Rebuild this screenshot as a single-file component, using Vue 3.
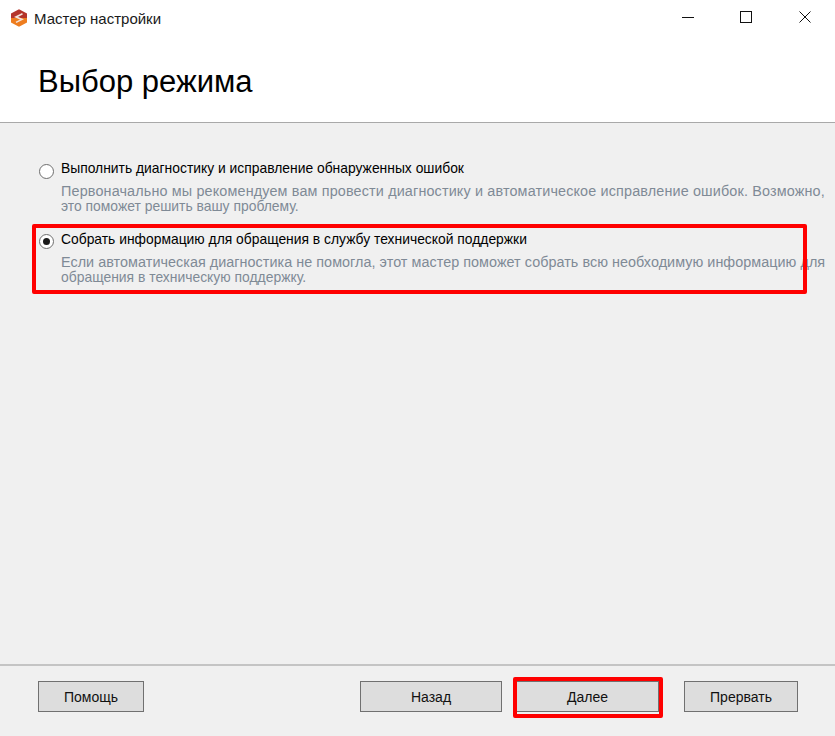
<script setup>
const options = [
  { title: 'Выполнить диагностику и исправление обнаруженных ошибок', lines: [{ text: 'Первоначально мы рекомендуем вам провести диагностику и автоматическое исправление ошибок. Возможно,', kind: 'long-a' }, { text: 'это поможет решить вашу проблему.', kind: 'short' }], checked: false },
  { title: 'Собрать информацию для обращения в службу технической поддержки', lines: [{ text: 'Если автоматическая диагностика не помогла, этот мастер поможет собрать всю необходимую информацию для', kind: 'long-b' }, { text: 'обращения в техническую поддержку.', kind: 'short' }], checked: true }
]
</script>

<template>
  <div class="win">
    <div class="top">
      <div class="titlebar">
        <svg class="logo" width="18" height="18" viewBox="0 0 18 18">
          <path d="M9 0.2 17 4.6V9H1V4.6Z" fill="#b5342a"/>
          <path d="M1 9H17V13.4L9 17.8 1 13.4Z" fill="#ee7d1f"/>
          <path d="M12.5 4.8 6 8 12 10.4 6 13.4" fill="none" stroke="#f3e3da" stroke-width="1.6"/>
        </svg>
        <span class="wintitle">Мастер настройки</span>
        <div class="controls">
          <svg width="12" height="12" viewBox="0 0 12 12"><path d="M0 6.5H12" stroke="#111" fill="none"/></svg>
          <svg width="12" height="12" viewBox="0 0 12 12"><rect x="0.5" y="0.5" width="11" height="11" stroke="#111" fill="none"/></svg>
          <svg class="close" width="12" height="12" viewBox="0 0 12 12"><path d="M0.5 0.5 11.5 11.5M11.5 0.5 0.5 11.5" stroke="#111" fill="none"/></svg>
        </div>
      </div>
      <h1 class="heading">Выбор режима</h1>
    </div>

    <main class="content">
      <div v-for="o in options" :key="o.title" class="option">
        <span class="radio" :class="{ on: o.checked }"></span>
        <div class="texts">
          <div class="otitle">{{ o.title }}</div>
          <div class="odesc"><div v-for="l in o.lines" :key="l.text" :class="l.kind">{{ l.text }}</div></div>
        </div>
      </div>
      <div class="mark mark-option"></div>
    </main>

    <footer class="footer">
      <button class="btn help">Помощь</button>
      <div class="spacer"></div>
      <button class="btn back">Назад</button>
      <button class="btn next">Далее</button>
      <button class="btn abort">Прервать</button>
      <div class="mark mark-next"></div>
    </footer>
  </div>
</template>

<style>
html, body { margin: 0; background: #f0f0f0; }
</style>

<style scoped>
.win {
  width: 835px;
  height: 736px;
  display: flex;
  flex-direction: column;
  background: #f0f0f0;
  font-family: "Liberation Sans", Arial, sans-serif;
  color: #000;
  overflow: hidden;
}
.top {
  height: 122px;
  background: #fff;
  border-bottom: 1px solid #a9a9a9;
  box-sizing: content-box;
}
.titlebar {
  height: 36px;
  display: flex;
  align-items: center;
  padding-left: 10px;
}
.logo { flex: none; }
.wintitle {
  margin-left: 6px;
  font-size: 15px;
  color: #1a1a1a;
}
.controls {
  margin-left: auto;
  margin-right: 24px;
  display: flex;
  gap: 46px;
  position: relative;
  top: -1px;
}
.close { margin-left: 1px; }
.heading {
  margin: 27px 0 0 38px;
  font-size: 31px;
  line-height: 38px;
  font-weight: 400;
}
.content {
  position: relative;
  flex: 1;
  padding: 37px 0 0 39px;
}
.option {
  display: flex;
  height: 71px;
}
.radio {
  flex: none;
  width: 13px;
  height: 13px;
  margin-top: 4px;
  border: 1px solid #6e6e6e;
  border-radius: 50%;
  background: #fff;
  position: relative;
}
.radio.on { margin-top: 3px; }
.radio.on::after {
  content: "";
  position: absolute;
  left: 3px;
  top: 3px;
  width: 7px;
  height: 7px;
  border-radius: 50%;
  background: #1a1a1a;
}
.texts { margin-left: 7px; }
.otitle {
  font-size: 13.87px;
  line-height: 17px;
  white-space: nowrap;
}
.odesc {
  margin-top: 6px;
  line-height: 16px;
  color: #7f8a96;
  white-space: nowrap;
}
.long-a { font-size: 14.38px; letter-spacing: 0.15px; }
.long-b { font-size: 14.38px; letter-spacing: 0.04px; }
.short { font-size: 13.9px; margin-top: -1px; }
.footer {
  position: relative;
  height: 72px;
  border-top: 2px solid #c4c4c4;
  box-sizing: border-box;
  display: flex;
  align-items: flex-start;
  padding: 15px 37px 0 38px;
}
.spacer { flex: 1; }
.btn {
  height: 31px;
  box-sizing: border-box;
  border: 1px solid #707070;
  background: #dddddd;
  font-family: inherit;
  font-size: 14px;
  color: #111;
  padding: 0;
}
.help { width: 106px; }
.back { width: 142px; }
.next { width: 143px; margin-left: 14px; }
.abort { width: 114px; margin-left: 25px; }
.mark {
  position: absolute;
  box-sizing: border-box;
  border: 4px solid #ff0000;
  border-radius: 2px;
  pointer-events: none;
}
.mark-option { left: 32px; top: 101px; width: 775px; height: 70px; }
.mark-next { left: 513px; top: 11px; width: 150px; height: 41px; }
</style>
